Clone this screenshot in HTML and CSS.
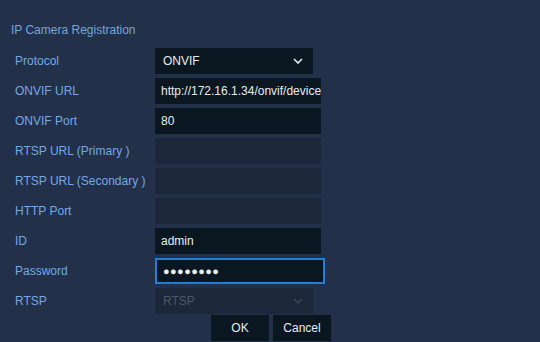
FILE: index.html
```html
<!DOCTYPE html>
<html>
<head>
<meta charset="utf-8">
<link rel="stylesheet" href="styles.css">
</head>
<body>
<div class="dialog">
  <div class="title">IP Camera Registration</div>
  <div class="form">
    <div class="label">Protocol</div>
    <div class="field select"><span>ONVIF</span><svg class="chev" width="10" height="6" viewBox="0 0 10 6"><path d="M1 1l4 4 4-4" fill="none" stroke="#e8edf2" stroke-width="1.6"/></svg></div>
    <div class="label">ONVIF URL</div>
    <div class="field input">http://172.16.1.34/onvif/device</div>
    <div class="label">ONVIF Port</div>
    <div class="field input">80</div>
    <div class="label">RTSP URL (Primary )</div>
    <div class="field input disabled"></div>
    <div class="label">RTSP URL (Secondary )</div>
    <div class="field input disabled"></div>
    <div class="label">HTTP Port</div>
    <div class="field input disabled"></div>
    <div class="label">ID</div>
    <div class="field input">admin</div>
    <div class="label">Password</div>
    <div class="field input focus"><span class="dots">●●●●●●●●</span></div>
    <div class="label">RTSP</div>
    <div class="field select disabled"><span>RTSP</span><svg class="chev" width="10" height="6" viewBox="0 0 10 6"><path d="M1 1l4 4 4-4" fill="none" stroke="#3c4a5c" stroke-width="1.4"/></svg></div>
  </div>
  <div class="buttons">
    <div class="btn">OK</div>
    <div class="btn">Cancel</div>
  </div>
</div>
</body>
</html>
```
FILE: styles.css
```css
html, body {
  margin: 0;
  padding: 0;
  background: #22304a;
  width: 540px;
  height: 342px;
  overflow: hidden;
  font-family: "Liberation Sans", Arial, sans-serif;
  font-size: 12px;
}
.dialog {
  padding: 22px 0 0 0;
}
.title {
  color: #76a6dc;
  padding-left: 11px;
  height: 16px;
  line-height: 16px;
  font-size: 12px;
}
.form {
  margin-top: 10px;
  padding-left: 15px;
  display: grid;
  grid-template-columns: 140px auto;
  row-gap: 4px;
  justify-items: start;
}
.label {
  color: #74a8e6;
  line-height: 26px;
  height: 26px;
}
.field {
  height: 26px;
  box-sizing: border-box;
  background: #0a1720;
  color: #e6ebf0;
  line-height: 26px;
  white-space: nowrap;
  overflow: hidden;
}
.input {
  width: 166px;
  padding-left: 6px;
}
.input.disabled {
  background: #1c2839;
}
.input.focus {
  width: 170px;
  border: 2px solid #1f7fd4;
  line-height: 22px;
  padding-left: 6px;
}
.dots {
  font-size: 11px;
  letter-spacing: 0.4px;
  color: #e8edf2;
}
.select {
  width: 158px;
  padding: 0 10px 0 8px;
  display: flex;
  align-items: center;
  justify-content: space-between;
}
.select.disabled {
  background: #1c2839;
  color: #4c5868;
}
.chev {
  display: block;
}
.buttons {
  display: flex;
  justify-content: center;
  gap: 4px;
  margin-top: 1px;
  padding-left: 2px;
}
.btn {
  width: 58px;
  height: 26px;
  line-height: 26px;
  text-align: center;
  background: #0a1720;
  color: #e6ebf0;
  font-size: 12px;
}
```
